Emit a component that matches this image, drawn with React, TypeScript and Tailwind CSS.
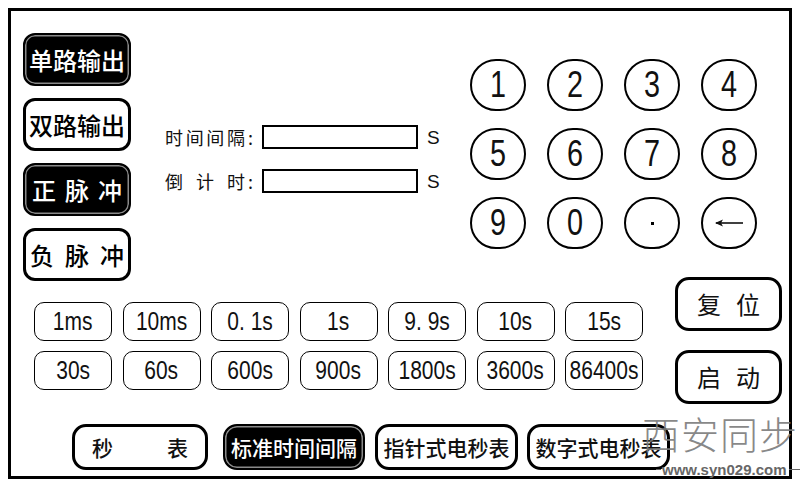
import React from "react";

const CJK = "font-['Noto_Sans_CJK_SC','Noto_Sans',sans-serif]";
const LAT = "font-['Liberation_Sans','Noto_Sans_CJK_SC',sans-serif]";

function SideBtn({ dark, children }: { dark?: boolean; children: React.ReactNode }) {
  return (
    <div
      className={
        "h-[53px] w-[108px] rounded-[12px] flex items-center justify-center text-[24px] leading-none font-medium " +
        CJK +
        (dark
          ? " bg-black text-white border-2 border-black shadow-[inset_0_0_0_1.5px_#8a8a8a]"
          : " bg-white text-black border-[3px] border-black")
      }
    >
      {children}
    </div>
  );
}

function Spread({ chars, className }: { chars: string[]; className: string }) {
  return (
    <div className={"flex justify-between w-full " + className}>
      {chars.map((c, i) => (
        <span key={i}>{c}</span>
      ))}
    </div>
  );
}

function Field({ chars }: { chars: string[] }) {
  return (
    <div className="flex items-center h-[24px]">
      <div className={"flex items-center w-[97px] text-[18px] leading-none text-[#111] " + CJK}>
        <div className="flex justify-between w-[80px]">
          {chars.map((c, i) => (
            <span key={i}>{c}</span>
          ))}
        </div>
        <span className="ml-[3px]">:</span>
      </div>
      <div className="w-[156px] h-[24px] border-2 border-black bg-white" />
      <span className={"ml-[9px] text-[19px] leading-none text-[#111] " + LAT}>S</span>
    </div>
  );
}

function Key({ children }: { children: React.ReactNode }) {
  return (
    <div className="w-[56px] h-[52px] rounded-full border-2 border-black flex items-center justify-center bg-white">
      {children}
    </div>
  );
}

function Digit({ d }: { d: string }) {
  return (
    <span className={"inline-block scale-x-[0.8] text-[36px] leading-none text-[#111] " + LAT}>{d}</span>
  );
}

function Preset({ label }: { label: string }) {
  return (
    <div className="h-[39px] rounded-[10px] border-[1.5px] border-black flex items-center justify-center bg-white overflow-visible">
      <span className={"inline-block scale-x-[0.84] text-[25px] leading-none whitespace-nowrap text-[#111] " + LAT}>
        {label}
      </span>
    </div>
  );
}

function RightBtn({ chars }: { chars: string[] }) {
  return (
    <div
      className={
        "w-[107px] h-[54px] rounded-[14px] border-[3px] border-black flex items-center justify-center gap-[15px] text-[24px] leading-none text-[#111] " +
        CJK
      }
    >
      {chars.map((c, i) => (
        <span key={i}>{c}</span>
      ))}
    </div>
  );
}

function BottomBtn({
  w,
  dark,
  children,
  className = "",
}: {
  w: string;
  dark?: boolean;
  children: React.ReactNode;
  className?: string;
}) {
  return (
    <div
      className={
        w +
        " h-[46px] rounded-[14px] flex items-center justify-center text-[21px] leading-none whitespace-nowrap font-medium " +
        CJK +
        (dark
          ? " bg-black text-white border-2 border-black shadow-[inset_0_0_0_1.5px_#8a8a8a]"
          : " bg-white text-[#111] border-[3px] border-black") +
        " " +
        className
      }
    >
      {children}
    </div>
  );
}

export default function App() {
  const presets = [
    "1ms",
    "10ms",
    "0. 1s",
    "1s",
    "9. 9s",
    "10s",
    "15s",
    "30s",
    "60s",
    "600s",
    "900s",
    "1800s",
    "3600s",
    "86400s",
  ];
  const keys = ["1", "2", "3", "4", "5", "6", "7", "8", "9", "0"];
  return (
    <div className="w-[800px] h-[486px] bg-white relative overflow-hidden">
      <div className="ml-[8px] mt-[8px] w-[784px] h-[471px] border-[3px] border-black flex flex-col">
        {/* Row A */}
        <div className="flex pt-[22px] pl-[12px]">
          <div className="flex flex-col gap-[12px]">
            <SideBtn dark>单路输出</SideBtn>
            <SideBtn>双路输出</SideBtn>
            <SideBtn dark>
              <Spread chars={["正", "脉", "冲"]} className="px-[7px]" />
            </SideBtn>
            <SideBtn>
              <Spread chars={["负", "脉", "冲"]} className="px-[4px]" />
            </SideBtn>
          </div>
          <div className="ml-[34px] w-[275px] pt-[92px] flex flex-col gap-[20px]">
            <Field chars={["时", "间", "间", "隔"]} />
            <Field chars={["倒", "计", "时"]} />
          </div>
          <div className="ml-[30px] pt-[26px]">
            <div className="grid grid-cols-[repeat(4,56px)] gap-x-[21px] gap-y-[17px]">
              {keys.map((k) => (
                <Key key={k}>
                  <Digit d={k} />
                </Key>
              ))}
              <Key>
                <div className="w-[3px] h-[3px] bg-black" />
              </Key>
              <Key>
                <svg width="32" height="12" viewBox="0 0 32 12">
                  <path d="M3 6 H30" stroke="#111" strokeWidth="1.6" fill="none" />
                  <path d="M2 6 L10 2.5 L8 6 L10 9.5 Z" fill="#111" />
                </svg>
              </Key>
            </div>
          </div>
        </div>
        {/* Row B */}
        <div className="flex pl-[23px] -mt-[4px]">
          <div className="mt-[25px] grid grid-cols-[repeat(7,78px)] gap-x-[10.5px] gap-y-[10px] self-start">
            {presets.map((p) => (
              <Preset key={p} label={p} />
            ))}
          </div>
          <div className="ml-[32px] flex flex-col gap-[19px]">
            <RightBtn chars={["复", "位"]} />
            <RightBtn chars={["启", "动"]} />
          </div>
        </div>
        {/* Bottom row */}
        <div className="flex pl-[61px] mt-[20px]">
          <BottomBtn w="w-[136px]">
            <div className="flex justify-between w-full px-[17px]">
              <span>秒</span>
              <span>表</span>
            </div>
          </BottomBtn>
          <BottomBtn w="w-[142px]" dark className="ml-[15px]">
            标准时间间隔
          </BottomBtn>
          <BottomBtn w="w-[143px]" className="ml-[10px]">
            指针式电秒表
          </BottomBtn>
          <BottomBtn w="w-[143px]" className="ml-[9px]">
            数字式电秒表
          </BottomBtn>
        </div>
      </div>
      {/* watermark */}
      <div className="absolute left-[642px] top-[414px] pointer-events-none">
        <div
          className={
            "text-[38px] leading-none tracking-[1px] font-light text-[#7c7c7c] opacity-90 whitespace-nowrap " + CJK
          }
        >
          西安同步
        </div>
      </div>
      <div className="absolute left-[656px] top-[462px] flex items-center text-[#666] pointer-events-none">
        <span className="w-[5px] h-[1.5px] bg-[#666]" />
        <span className={"text-[15px] leading-none font-bold ml-[1px] " + LAT}>www.syn029.com</span>
        <span className="ml-[2px] w-[20px] h-[1.5px] bg-[#666]" />
      </div>
    </div>
  );
}
